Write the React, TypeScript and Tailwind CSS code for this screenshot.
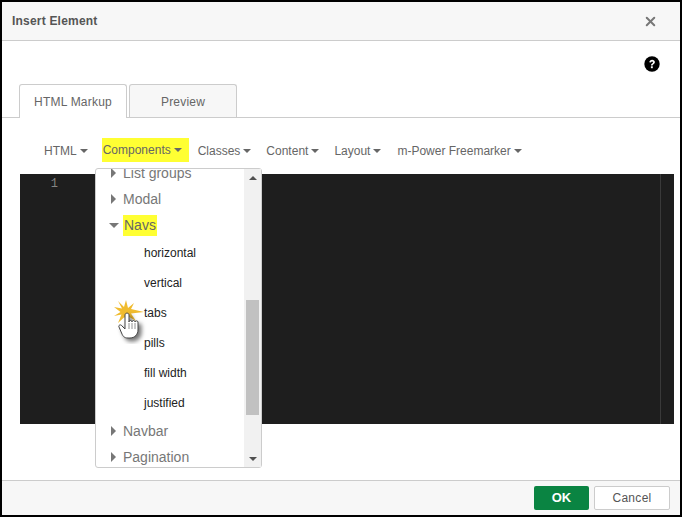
import { X } from "lucide-react";

const menus = ["Classes", "Content", "Layout", "m-Power Freemarker"];
const subItems = ["horizontal", "vertical", "tabs", "pills", "fill width", "justified"];

function Caret() {
  return <span className="ml-[3px] inline-block border-x-[4px] border-t-[4px] border-x-transparent border-t-current align-[2px]" />;
}

function RightArrow() {
  return <span className="border-y-[5px] border-l-[5px] border-y-transparent border-l-[#777]" />;
}

function ClickCursor() {
  return (
    <svg width="36" height="44" viewBox="0 0 36 44" className="absolute left-[18px] top-[131px]">
      <polygon
        points="12,0 14,8 20,3 17,9 30,12 17,13.500 22,21 14.500,16.500 13,25 10.500,17 4,23 7.500,14.500 0,16 6.500,12 0,7 8,8.500 4,1 10,7"
        fill="#f0bb2e"
      />
      <path
        d="M11 15c0-2.500 4-2.500 4 0v7c0-2 3-2 3 0 0-2 3-2 3 0 0-1.500 3-1.500 3 0v8c0 4-3 8-8 8h-2c-4 0-5-2-6-4l-3-7c-1-2 2-3 3-1l3 3z"
        fill="#fff"
        stroke="#444"
        strokeWidth="1"
        className="drop-shadow-[3px_3px_2px_rgba(0,0,0,0.55)]"
      />
      <path d="M15 23v6M18 23v6M21 23v6" stroke="#777" strokeWidth="0.8" fill="none" />
    </svg>
  );
}

function Dropdown() {
  return (
    <div className="absolute left-[95px] top-[168px] flex h-[300px] w-[167px] rounded-[3px] border border-[#ccc] bg-white text-[14px] text-[#777]">
      <div className="relative flex-1 overflow-hidden">
        <div className="mt-[-7px] flex h-[22px] items-center gap-[7px] pl-[15px]">
          <RightArrow />
          <span>List groups</span>
        </div>
        <div className="mt-[4px] flex h-[22px] items-center gap-[7px] pl-[15px]">
          <RightArrow />
          <span>Modal</span>
        </div>
        <div className="mt-[4px] flex h-[22px] items-center gap-[4px] pl-[13px]">
          <span className="border-x-[5px] border-t-[5px] border-x-transparent border-t-[#777]" />
          <span className="bg-[#ffff33] px-px text-[#666]">Navs</span>
        </div>
        <div className="mt-[2px] flex flex-col pl-[48px] text-[12px] text-[#222]">
          {subItems.map((item) => (
            <div key={item} className="flex h-[30px] items-center">
              {item}
            </div>
          ))}
        </div>
        <div className="mt-[2px] flex h-[22px] items-center gap-[7px] pl-[15px]">
          <RightArrow />
          <span>Navbar</span>
        </div>
        <div className="mt-[4px] flex h-[22px] items-center gap-[7px] pl-[15px]">
          <RightArrow />
          <span>Pagination</span>
        </div>
        <ClickCursor />
      </div>
      <div className="flex w-[17px] flex-col bg-[#f1f1f1]">
        <div className="flex h-[17px] items-center justify-center">
          <span className="border-x-[4px] border-b-[4px] border-x-transparent border-b-[#505050]" />
        </div>
        <div className="mt-[114px] ml-[2px] h-[115px] w-[13px] bg-[#c1c1c1]" />
        <div className="mt-auto flex h-[17px] items-center justify-center">
          <span className="border-x-[4px] border-t-[4px] border-x-transparent border-t-[#505050]" />
        </div>
      </div>
    </div>
  );
}

export default function App() {
  return (
    <div className="relative flex h-[517px] w-[682px] flex-col border-2 border-black bg-white font-['Liberation_Sans',Arial,sans-serif] text-[12px] text-[#666]">
      {/* Header */}
      <div className="flex h-[39px] shrink-0 items-center justify-between border-b border-[#ccc] bg-[#f7f7f7] pl-[10px] pr-[22px]">
        <span className="font-bold tracking-[0.2px] text-[#555]">Insert Element</span>
        <X size={15} strokeWidth={3.2} className="text-[#777]" />
      </div>

      {/* Help */}
      <div className="flex h-[43px] shrink-0 items-start justify-end pr-[20px] pt-[15px]">
        <svg width="16" height="16" viewBox="0 0 16 16">
          <circle cx="8" cy="8" r="7.7" fill="#000" />
          <path d="M5.3 6.2C5.4 4.6 6.6 3.7 8.1 3.7c1.6 0 2.8 1 2.8 2.4 0 1.1-.6 1.7-1.4 2.2-.6.4-.8.6-.8 1.2H7c0-1.1.3-1.6 1.1-2.1.6-.4.9-.7.9-1.2 0-.5-.4-.8-.9-.8-.6 0-1 .4-1.1 1z" fill="#fff" />
          <rect x="6.9" y="10.3" width="1.9" height="1.9" fill="#fff" />
        </svg>
      </div>

      {/* Tabs */}
      <div className="flex h-[34px] shrink-0 items-end border-b border-[#ccc] pl-[17px] text-[12px] tracking-[0.2px]">
        <div className="mb-[-1px] flex h-[34px] w-[108px] items-center justify-center rounded-t-[3px] border border-b-0 border-[#ccc] bg-white pt-[1px]">
          HTML Markup
        </div>
        <div className="ml-[2px] flex h-[33px] w-[108px] items-center justify-center rounded-t-[3px] border border-b-0 border-[#ccc] bg-[#f7f7f7] pt-[1px]">
          Preview
        </div>
      </div>

      {/* Menu bar */}
      <div className="flex h-[56px] shrink-0 items-start pl-[42px] pt-[20px]">
        <div className="mt-[1px] flex h-[23px] items-center">
          HTML
          <Caret />
        </div>
        <div className="ml-[14px] flex h-[24px] w-[87px] items-center bg-[#ffff33] pl-[1px]">
          Components
          <Caret />
        </div>
        {menus.map((label, i) => (
          <div
            key={label}
            className={`mt-[1px] flex h-[23px] items-center ${i === 0 ? "ml-[9px]" : i === 3 ? "ml-[16px]" : "ml-[15px]"}`}
          >
            {label}
            <Caret />
          </div>
        ))}
      </div>

      {/* Editor */}
      <div className="mx-[18px] mr-[6px] flex h-[250px] shrink-0 bg-[#1e1e1e] font-['Liberation_Mono',monospace] text-[12px] text-[#858585]">
        <div className="w-[38px] pt-[1px] text-right">1</div>
        <div className="flex-1" />
        <div className="w-[14px] border-l border-[#3a3a3a]" />
      </div>

      <div className="flex-1" />

      {/* Footer */}
      <div className="flex h-[35px] shrink-0 items-center justify-end gap-[5px] border-t border-[#ccc] bg-[#f7f7f7] pr-[10px]">
        <button className="h-[24px] w-[55px] rounded-[2px] bg-[#0a8442] text-[13px] font-bold text-white">OK</button>
        <button className="h-[24px] w-[76px] rounded-[2px] border border-[#ccc] bg-white text-[12px] tracking-[0.3px] text-[#555]">Cancel</button>
      </div>

      <div className="absolute -left-[2px] -top-[2px]">
        <Dropdown />
      </div>
    </div>
  );
}
